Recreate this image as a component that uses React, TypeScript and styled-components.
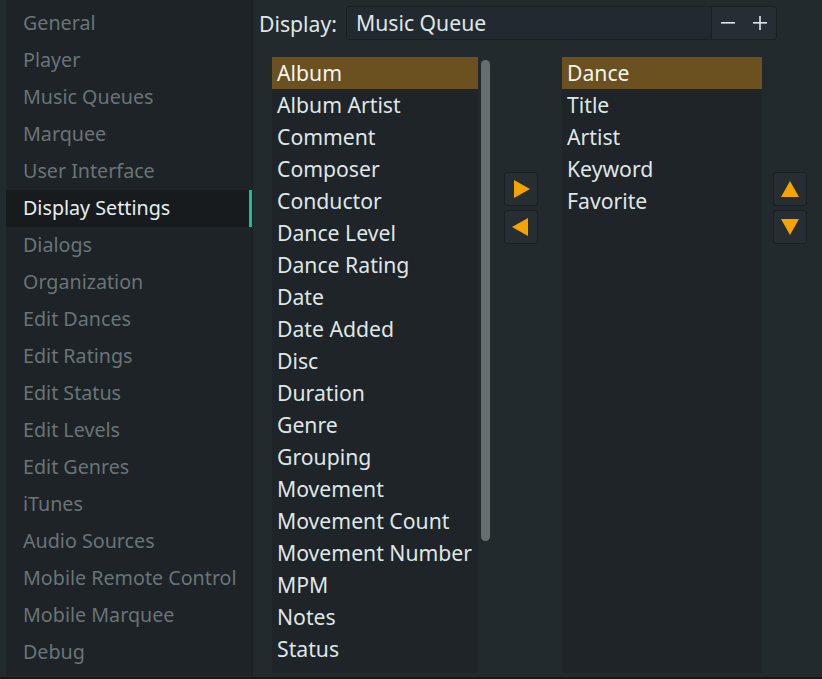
import React from "react";
import styled, { createGlobalStyle } from "styled-components";

const GlobalStyle = createGlobalStyle`
  html, body {
    margin: 0;
    padding: 0;
    background: #15191b;
  }
  body {
    font-family: "Noto Sans", "Open Sans", sans-serif;
    font-size: 20px;
  }
`;

const Window = styled.div`
  width: 822px;
  height: 677px;
  display: flex;
  background: #232a2e;
  border-bottom: 2px solid #15191b;
  overflow: hidden;
`;

const Sidebar = styled.div`
  margin-left: 6px;
  width: 247px;
  height: 676px;
  box-sizing: border-box;
  padding-top: 5px;
  background: #1d2326;
  border-right: 1px solid #1a1f22;
  display: flex;
  flex-direction: column;
  font-size: 19.7px;
`;

const NavItem = styled.div<{ $active?: boolean }>`
  height: 37px;
  line-height: 35px;
  padding-left: 17px;
  box-sizing: border-box;
  color: ${(p) => (p.$active ? "#e6eef0" : "#6a7477")};
  background: ${(p) => (p.$active ? "#171b1d" : "transparent")};
  border-right: 3px solid ${(p) => (p.$active ? "#1abc9c" : "transparent")};
  white-space: nowrap;
`;

const Main = styled.div`
  flex: 1;
  display: flex;
  flex-direction: column;
  padding: 6px 0 0 6px;
  font-size: 21.2px;
`;

const Header = styled.div`
  display: flex;
  align-items: center;
  height: 34px;
  gap: 9px;
  color: #dfe6e8;
`;

const Combo = styled.div`
  width: 431px;
  height: 34px;
  box-sizing: border-box;
  display: flex;
  align-items: stretch;
  background: #232a2f;
  border: 1px solid #1a1f22;
  border-radius: 3px;
`;

const ComboText = styled.div`
  flex: 1;
  padding-left: 9px;
  line-height: 31px;
  color: #dfe6e8;
`;

const SpinButtons = styled.div`
  width: 64px;
  display: flex;
  align-items: center;
  justify-content: space-around;
  border-left: 1px solid #1a1f22;
  background: #262e34;
  border-radius: 0 3px 3px 0;
`;

const Body = styled.div`
  display: flex;
  align-items: flex-start;
  margin-top: 17px;
  padding-left: 13px;
`;

const ListFrame = styled.div`
  display: flex;
  height: 616px;
  background: #222a2d;
`;

const List = styled.div<{ $width: number }>`
  width: ${(p) => p.$width}px;
  height: 616px;
  background: #1e2427;
  overflow: hidden;
`;

const ListItem = styled.div<{ $selected?: boolean }>`
  height: 32px;
  line-height: 32px;
  padding-left: 5px;
  color: ${(p) => (p.$selected ? "#f4f4f0" : "#dfe6e8")};
  background: ${(p) => (p.$selected ? "#6b5020" : "transparent")};
  white-space: nowrap;
`;

const ScrollTrack = styled.div`
  width: 15px;
  padding: 3px 0 0 3px;
  box-sizing: border-box;
`;

const ScrollThumb = styled.div`
  width: 9px;
  height: 481px;
  border-radius: 5px;
  background: #666f70;
`;

const ButtonColumn = styled.div<{ $left: number; $right?: number }>`
  display: flex;
  flex-direction: column;
  gap: 4px;
  margin-top: 115px;
  margin-left: ${(p) => p.$left}px;
  margin-right: ${(p) => p.$right ?? 0}px;
`;

const ArrowButton = styled.div`
  width: 34px;
  height: 34px;
  box-sizing: border-box;
  display: flex;
  align-items: center;
  justify-content: center;
  background: #262e34;
  border: 1px solid #1a1f22;
  border-radius: 3px;
`;

const Triangle = ({ dir }: { dir: "right" | "left" | "up" | "down" }) => {
  const pts = {
    right: "3,1 19,10 3,19",
    left: "17,1 1,10 17,19",
    up: "10,2 19,18 1,18",
    down: "1,2 19,2 10,18",
  }[dir];
  return (
    <svg width="20" height="20" viewBox="0 0 20 20">
      <polygon points={pts} fill="#f5a300" />
    </svg>
  );
};

const nav = [
  "General",
  "Player",
  "Music Queues",
  "Marquee",
  "User Interface",
  "Display Settings",
  "Dialogs",
  "Organization",
  "Edit Dances",
  "Edit Ratings",
  "Edit Status",
  "Edit Levels",
  "Edit Genres",
  "iTunes",
  "Audio Sources",
  "Mobile Remote Control",
  "Mobile Marquee",
  "Debug",
];

const available = [
  "Album",
  "Album Artist",
  "Comment",
  "Composer",
  "Conductor",
  "Dance Level",
  "Dance Rating",
  "Date",
  "Date Added",
  "Disc",
  "Duration",
  "Genre",
  "Grouping",
  "Movement",
  "Movement Count",
  "Movement Number",
  "MPM",
  "Notes",
  "Status",
];

const shown = ["Dance", "Title", "Artist", "Keyword", "Favorite"];

export default function App() {
  return (
    <>
      <GlobalStyle />
      <Window>
        <Sidebar>
          {nav.map((n) => (
            <NavItem key={n} $active={n === "Display Settings"}>
              {n}
            </NavItem>
          ))}
        </Sidebar>
        <Main>
          <Header>
            <span>Display:</span>
            <Combo>
              <ComboText>Music Queue</ComboText>
              <SpinButtons>
                <svg width="16" height="16" viewBox="0 0 16 16">
                  <rect x="1" y="7" width="14" height="1.6" fill="#dfe6e8" />
                </svg>
                <svg width="16" height="16" viewBox="0 0 16 16">
                  <rect x="1" y="7" width="14" height="1.6" fill="#dfe6e8" />
                  <rect x="7.2" y="1" width="1.6" height="14" fill="#dfe6e8" />
                </svg>
              </SpinButtons>
            </Combo>
          </Header>
          <Body>
            <ListFrame>
              <List $width={206}>
                {available.map((a) => (
                  <ListItem key={a} $selected={a === "Album"}>
                    {a}
                  </ListItem>
                ))}
              </List>
              <ScrollTrack>
                <ScrollThumb />
              </ScrollTrack>
            </ListFrame>
            <ButtonColumn $left={11} $right={24}>
              <ArrowButton>
                <Triangle dir="right" />
              </ArrowButton>
              <ArrowButton>
                <Triangle dir="left" />
              </ArrowButton>
            </ButtonColumn>
            <List $width={200}>
              {shown.map((s) => (
                <ListItem key={s} $selected={s === "Dance"}>
                  {s}
                </ListItem>
              ))}
            </List>
            <ButtonColumn $left={11}>
              <ArrowButton>
                <Triangle dir="up" />
              </ArrowButton>
              <ArrowButton>
                <Triangle dir="down" />
              </ArrowButton>
            </ButtonColumn>
          </Body>
        </Main>
      </Window>
    </>
  );
}
